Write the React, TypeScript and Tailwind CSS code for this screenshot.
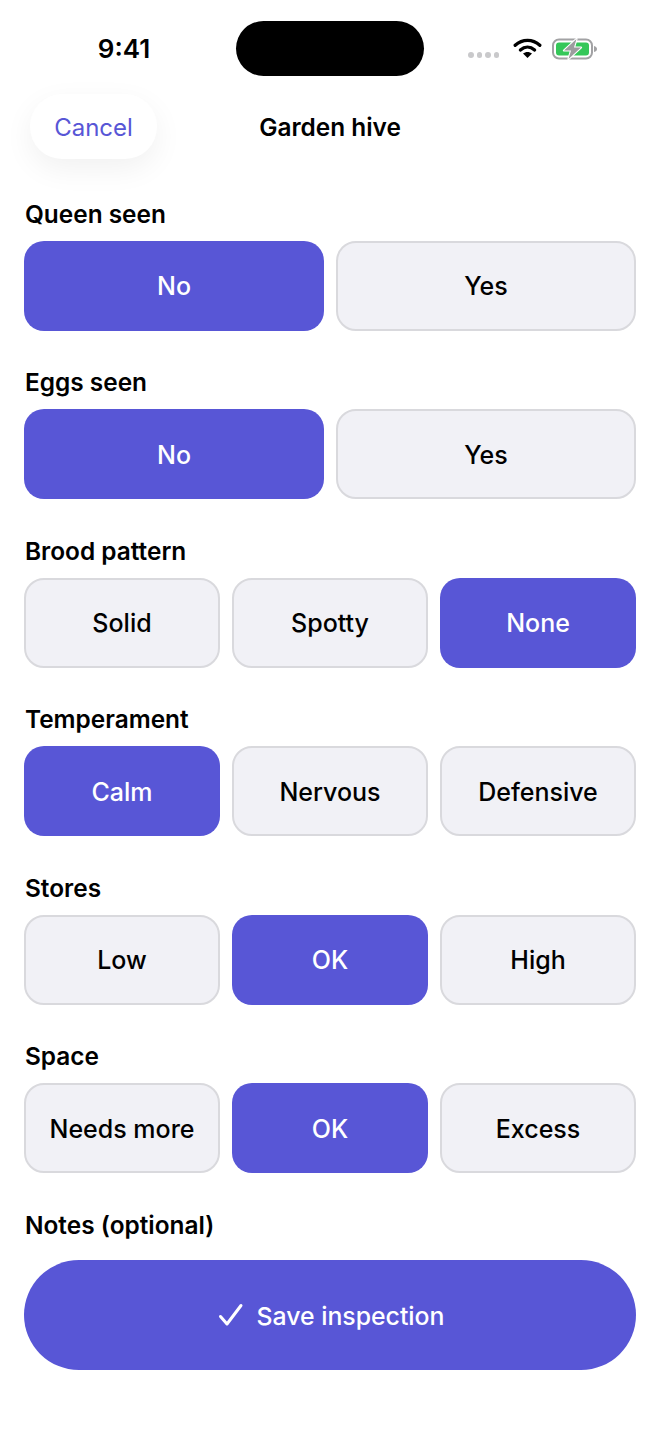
const sections: { label: string; options: string[]; selected: number }[] = [
  { label: "Queen seen", options: ["No", "Yes"], selected: 0 },
  { label: "Eggs seen", options: ["No", "Yes"], selected: 0 },
  { label: "Brood pattern", options: ["Solid", "Spotty", "None"], selected: 2 },
  { label: "Temperament", options: ["Calm", "Nervous", "Defensive"], selected: 0 },
  { label: "Stores", options: ["Low", "OK", "High"], selected: 1 },
  { label: "Space", options: ["Needs more", "OK", "Excess"], selected: 1 },
];

function StatusIcons() {
  return (
    <div className="flex items-center">
      <div className="flex gap-[3px] mt-[13px] mr-[14px]">
        {[0, 1, 2, 3].map((i) => (
          <span key={i} className="w-[5.5px] h-[5.5px] rounded-full bg-[#c9c9cb]" />
        ))}
      </div>
      <svg width="30" height="22" viewBox="0 0 30 22" className="mr-[9px] -mt-[1px]">
        <path d="M2.2 8.3 C9.5 1.6 19.6 1.6 26.8 8.3" fill="none" stroke="#000" strokeWidth="3.3" strokeLinecap="round" />
        <path d="M7.4 13 C11.7 9.2 17.3 9.2 21.6 13" fill="none" stroke="#000" strokeWidth="3.3" strokeLinecap="round" />
        <path d="M14.5 21 L10 16.5 C12.6 14.4 16.4 14.4 19 16.5 Z" fill="#000" />
      </svg>
      <svg width="46" height="22" viewBox="0 0 46 22">
        <rect x="1" y="1.5" width="39" height="19" rx="6" fill="none" stroke="#a2a2a4" strokeWidth="2" />
        <rect x="4" y="4.5" width="33" height="13" rx="3" fill="#35c759" />
        <path d="M42 8 C44 8.5 45 9.5 45 11 C45 12.5 44 13.5 42 14 Z" fill="#a2a2a4" />
        <path d="M24.5 1 L12 12.5 H19 L16.5 21 L29 9.5 H22 Z" fill="#9c9c9e" stroke="#fff" strokeWidth="2.2" strokeLinejoin="round" paintOrder="stroke" />
      </svg>
    </div>
  );
}

export default function App() {
  return (
    <div className="w-[660px] h-[1434px] bg-white overflow-hidden text-black font-['Inter',sans-serif]">
      <div className="h-[94px] pt-[21px] flex">
        <div className="w-[236px] h-[55px] flex items-center justify-center pl-[12px]">
          <span className="text-[26px] leading-none font-semibold">9:41</span>
        </div>
        <div className="w-[188px] h-[55px] rounded-full bg-black" />
        <div className="flex-1 h-[55px] pl-[44px] flex items-center">
          <StatusIcons />
        </div>
      </div>
      <div className="relative h-[65px] mb-[39.75px] flex items-center justify-center">
        <button className="absolute left-[30px] top-0 w-[127px] h-[65px] pt-[2px] rounded-[32px] bg-white shadow-[0_10px_30px_rgba(0,0,0,0.06)] text-[#5856d6] text-[24px] leading-none">
          Cancel
        </button>
        <span className="pt-[2px] text-[24.4px] font-semibold leading-none">Garden hive</span>
      </div>
      <div className="px-[24px]">
        {sections.map((s) => (
          <section key={s.label} className="mb-[36.5px]">
            <h2 className="pl-[1px] text-[24.4px] leading-[30px] font-semibold mb-[12px]">{s.label}</h2>
            <div className={s.options.length === 2 ? "grid grid-cols-2 gap-[12px]" : "grid grid-cols-3 gap-[12px]"}>
              {s.options.map((o, i) => (
                <button
                  key={o}
                  className={
                    i === s.selected
                      ? "h-[90px] pt-[2px] rounded-[20px] bg-[#5856d6] text-white text-[25px] font-medium"
                      : "h-[90px] pt-[2px] rounded-[20px] bg-[#f1f1f6] border-2 border-[#d9d9dd] text-black text-[25px] font-medium"
                  }
                >
                  {o}
                </button>
              ))}
            </div>
          </section>
        ))}
        <h2 className="pl-[1px] text-[24.4px] leading-[30px] font-semibold mb-[20px]">Notes (optional)</h2>
        <button className="w-full h-[110.5px] pt-[3px] rounded-[56px] bg-[#5856d6] text-white text-[25px] font-medium flex items-center justify-center gap-[13px]">
          <svg width="26" height="24" viewBox="0 0 26 24" fill="none" stroke="#fff" strokeWidth="3" strokeLinecap="round" strokeLinejoin="round" className="ml-[2px] -mt-[3px]">
            <path d="M2.5 13.5 L9 21 L23 2.5" />
          </svg>
          <span className="text-[24.8px]">Save inspection</span>
        </button>
      </div>
    </div>
  );
}
